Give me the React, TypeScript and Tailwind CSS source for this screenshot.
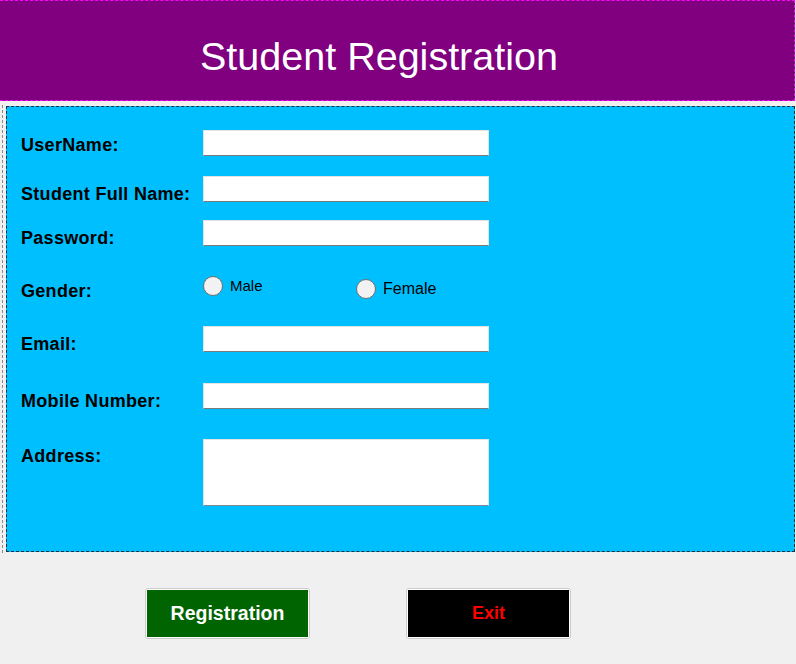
export default function App() {
    const font = { fontFamily: '"Liberation Sans", Arial, sans-serif' }
    const inputCls = "block w-[286px] h-[26px] bg-white border border-[#e3e3e3] border-b-[#7a7a7a] focus:outline-none"
    const labelCls = "w-[182px] text-[18px] leading-[18px] font-bold text-black tracking-[0.3px] whitespace-nowrap"

    return (
        <div className="w-[796px] h-[664px] bg-[#f0f0f0] overflow-hidden" style={font}>
            <div className="w-[795px] h-[101px] bg-[#800080] border-t border-r border-b border-dashed border-[#ff00ff] pl-[200px] pt-[35px]">
                <h1 className="text-[39.5px] leading-[40px] text-white font-normal">Student Registration</h1>
            </div>

            <div className="ml-[2px] mt-[4px] w-[793px] py-px pl-[3px] border-l border-dashed border-[#8a8a8a]">
                <form className="h-[446px] bg-[#00bfff] border border-dashed border-[#1f2f3f] pl-[14px] pt-[23px]" onSubmit={(e) => e.preventDefault()}>
                    <div className="flex items-start h-[26px]">
                        <label htmlFor="uname" className={`${labelCls} mt-[6px]`}>UserName:</label>
                        <input type="text" id="uname" className={inputCls} />
                    </div>
                    <div className="flex items-start h-[26px] mt-[20px]">
                        <label htmlFor="fname" className={`${labelCls} mt-[9px]`}>Student Full Name:</label>
                        <input type="text" id="fname" className={inputCls} />
                    </div>
                    <div className="flex items-start h-[26px] mt-[18px]">
                        <label htmlFor="pass" className={`${labelCls} mt-[9px]`}>Password:</label>
                        <input type="password" id="pass" className={inputCls} />
                    </div>
                    <div className="flex items-start mt-[30px] h-[24px]">
                        <span className={`${labelCls} mt-[6px]`}>Gender:</span>
                        <label className="flex items-start w-[153px]">
                            <input type="radio" name="gender" className="appearance-none w-[20px] h-[20px] rounded-full bg-[#f2f2f2] border border-[#6e6e6e]" />
                            <span className="ml-[7px] mt-[2px] text-[15px] leading-[15px] text-black">Male</span>
                        </label>
                        <label className="flex items-start mt-[3px]">
                            <input type="radio" name="gender" className="appearance-none w-[20px] h-[20px] rounded-full bg-[#f2f2f2] border border-[#6e6e6e]" />
                            <span className="ml-[7px] mt-[2px] text-[16px] leading-[16px] text-black">Female</span>
                        </label>
                    </div>
                    <div className="flex items-start h-[26px] mt-[26px]">
                        <label htmlFor="email" className={`${labelCls} mt-[9px]`}>Email:</label>
                        <input type="email" id="email" className={inputCls} />
                    </div>
                    <div className="flex items-start h-[26px] mt-[31px]">
                        <label htmlFor="mobile" className={`${labelCls} mt-[9px]`}>Mobile Number:</label>
                        <input type="text" id="mobile" className={inputCls} />
                    </div>
                    <div className="flex items-start h-[67px] mt-[30px]">
                        <label htmlFor="address" className={`${labelCls} mt-[8px]`}>Address:</label>
                        <textarea id="address" className="block w-[286px] h-[67px] resize-none bg-white border border-[#e3e3e3] border-b-[#7a8a9a] focus:outline-none"></textarea>
                    </div>
                </form>
            </div>

            <div className="flex mt-[35px] pl-[145px] gap-[96px]">
                <button className="w-[165px] h-[51px] rounded-[3px] border border-[#cccccc] bg-white p-px">
                    <span className="flex h-full w-full items-center justify-center bg-[#006400] text-white text-[19.5px] font-bold">Registration</span>
                </button>
                <button className="w-[165px] h-[51px] rounded-[3px] border border-[#cccccc] bg-white p-px">
                    <span className="flex h-full w-full items-center justify-center bg-black text-[#ff0000] text-[18px] font-bold">Exit</span>
                </button>
            </div>
        </div>
    )
}
